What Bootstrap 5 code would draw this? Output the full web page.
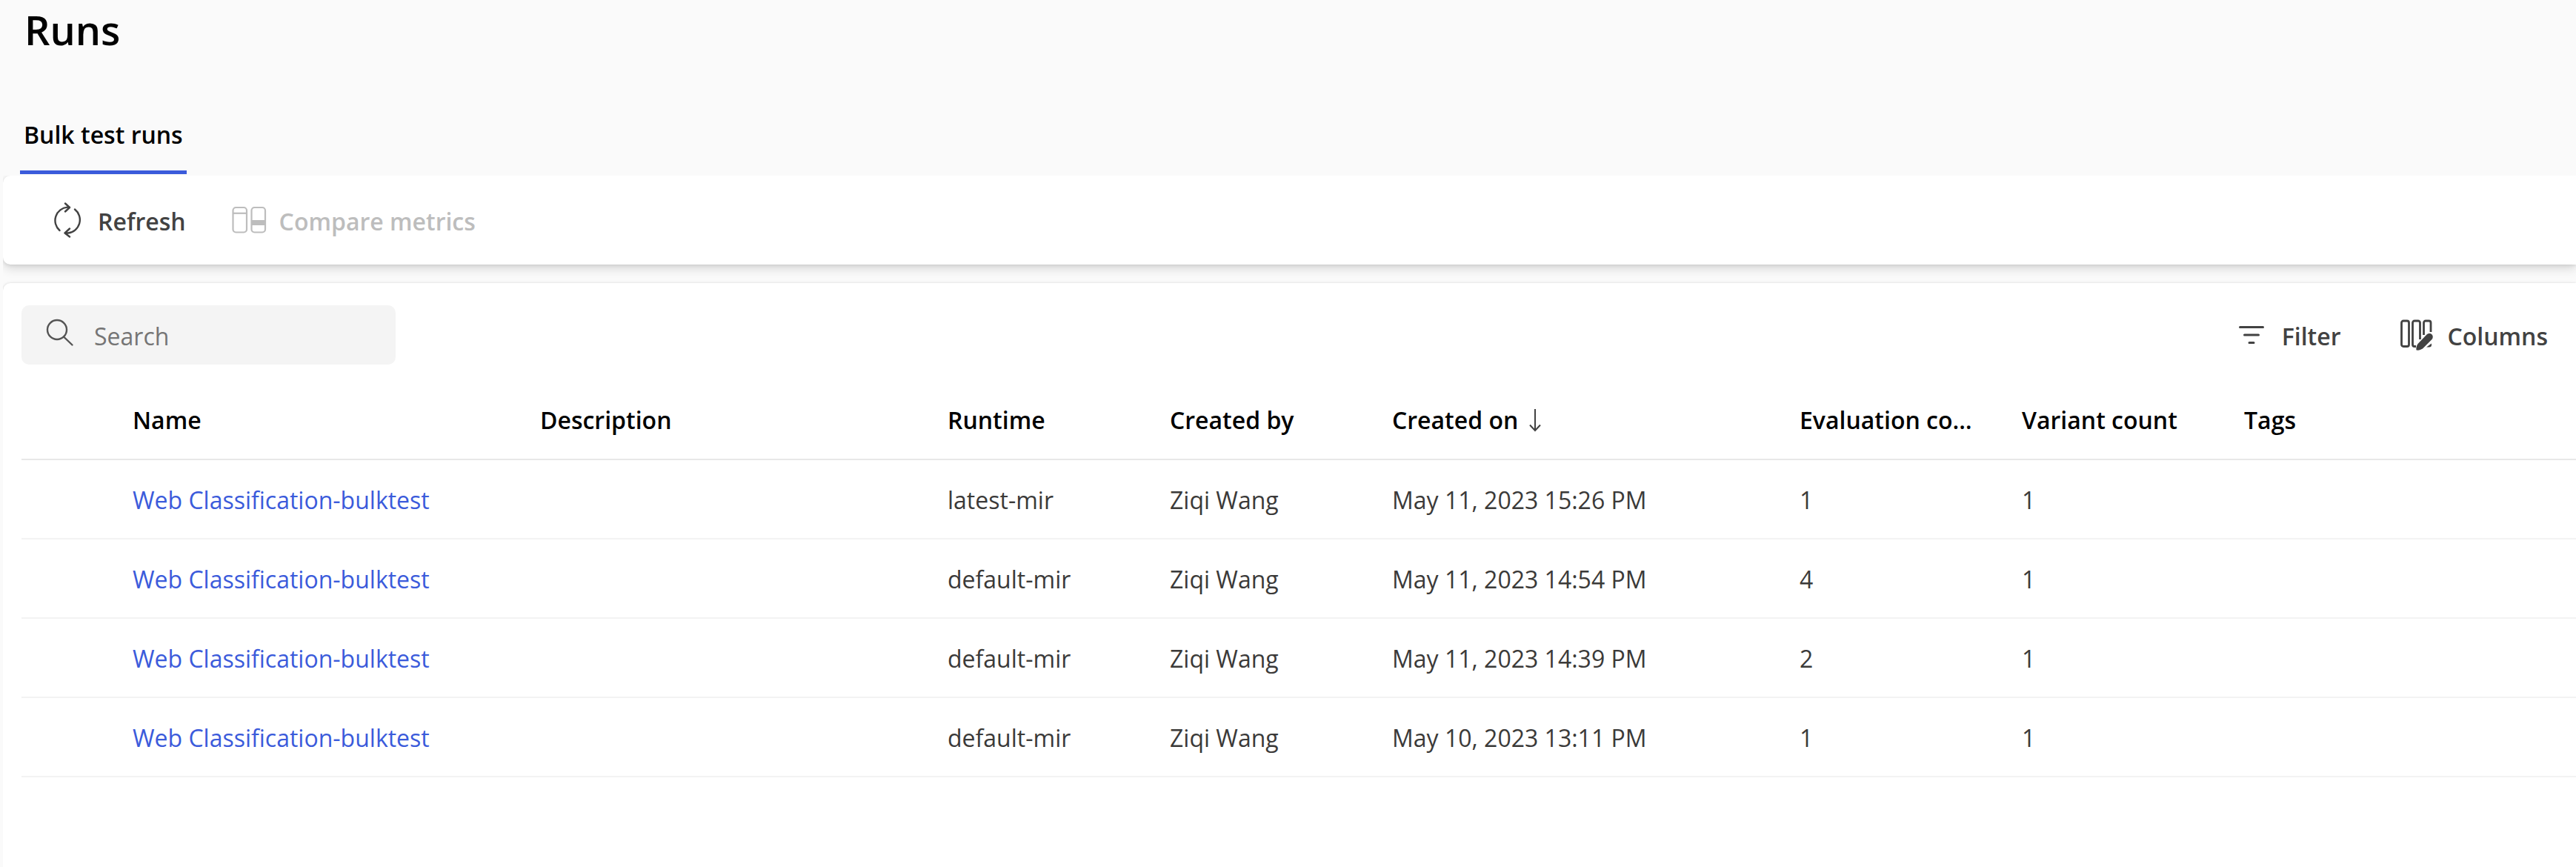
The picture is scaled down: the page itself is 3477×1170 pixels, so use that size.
<!DOCTYPE html>
<html lang="en">
<head>
<meta charset="utf-8">
<meta name="viewport" content="width=device-width, initial-scale=1">
<title>Runs</title>
<link href="https://cdn.jsdelivr.net/npm/bootstrap@5.3.0/dist/css/bootstrap.min.css" rel="stylesheet">
<style>
  body {
    font-family: "Open Sans", "Noto Sans", sans-serif;
    font-size: 32px;
    line-height: 48px;
    color: #3b3a39;
    background: #fafafa;
  }
  .page-title {
    font-size: 54px;
    line-height: 64px;
    font-weight: 600;
    color: #000;
    margin: 0;
    padding: 8px 33px 86px;
  }
  .run-tabs { padding-left: 27px; margin-bottom: 2px; }
  .run-tabs .nav-link {
    padding: 0 5px 24px;
    border-bottom: 5px solid #3b5bdb;
    color: #000;
    font-weight: 600;
  }
  .surfaces { margin-left: 4px; gap: 25px; overflow: hidden; }
  .surface { background: #fff; }
  .command-bar {
    height: 120px;
    padding: 0 68px;
    gap: 62px;
    border-radius: 10px 0 0 10px;
    box-shadow: 0 6px 14px rgba(0, 0, 0, .13), 0 1px 5px rgba(0, 0, 0, .11);
  }
  .runs-panel {
    padding: 30px 0 0 25px;
    border-radius: 10px 0 0 0;
    box-shadow: 0 3px 7px rgba(0, 0, 0, .13), 0 0 3px rgba(0, 0, 0, .11);
  }
  .cmd {
    border: 0;
    padding: 0;
    background: none;
    color: #424242;
    font-weight: 600;
  }
  .cmd:disabled { color: #bdbdbd; }
  .cmd svg { flex: none; }
  .cmd span { padding-top: 3px; }
  .search-box {
    width: 505px;
    height: 80px;
    padding: 0 32px;
    gap: 26px;
    border-radius: 10px;
    background: #f4f4f4;
  }
  .search-box input {
    border: 0;
    padding: 3px 0 0;
    background: none;
    font-size: 32px;
    line-height: 48px;
    color: #3b3a39;
    box-shadow: none !important;
  }
  .search-box input::placeholder { color: #757575; opacity: 1; }
  .panel-actions { gap: 80px; padding-right: 38px; }
  .panel-actions .cmd:last-child { gap: 18px; }
  .panel-actions .cmd:first-child { gap: 24px; }
  .runs-table {
    table-layout: fixed;
    border-collapse: separate;
    border-spacing: 0;
    margin: 19px 0 0;
    color: #3b3a39;
  }
  .runs-table > thead > tr > th,
  .runs-table > tbody > tr > td {
    height: 107px;
    padding: 3px 32px 0 20px;
    border-bottom: 2px solid #f3f3f3;
    vertical-align: middle;
    background: none;
    color: inherit;
    white-space: nowrap;
    overflow: hidden;
    text-overflow: ellipsis;
  }
  .runs-table > thead > tr > th {
    height: 110px;
    border-bottom-color: #e8e8e8;
    color: #000;
    font-weight: 600;
  }
  .runs-table a { color: #3b5bdb; text-decoration: none; }
  .sort-label { gap: 14px; }
  .col-select { width: 130px; }
  .col-wide { width: 550px; }
  .col-narrow { width: 300px; }
</style>
</head>
<body>
<main class="d-flex flex-column min-vh-100">
  <h1 class="page-title">Runs</h1>
  <nav class="nav run-tabs">
    <a class="nav-link active" aria-current="page" href="#">Bulk test runs</a>
  </nav>

  <div class="surfaces d-flex flex-column flex-grow-1">
    <div class="surface command-bar d-flex align-items-center">
      <button type="button" class="cmd d-flex align-items-center gap-3">
        <svg width="44" height="48" viewBox="0 0 44 48" fill="none" stroke="currentColor" stroke-width="2.4" stroke-linecap="round" stroke-linejoin="round" aria-hidden="true">
          <path d="M8.500 38A18 18 0 0 1 19 6.600L22 6.600M16 1.500L22 7L16 12.500M29 9.500A18 18 0 0 1 20 41.500L17 41.500M22 35.500L15.500 41.500L22 46.500"/>
        </svg>
        <span>Refresh</span>
      </button>
      <button type="button" class="cmd d-flex align-items-center gap-3" disabled>
        <svg width="48" height="38" viewBox="0 0 48 38" fill="none" stroke="currentColor" stroke-width="2.200" aria-hidden="true">
          <rect x="1.500" y="2" width="18.500" height="33.500" rx="4"/>
          <rect x="26.500" y="2" width="18.500" height="33.500" rx="4"/>
          <path d="M1.500 9.800H20"/>
          <path d="M26.500 19h18.500v7H26.500z" fill="currentColor" stroke="none"/>
        </svg>
        <span>Compare metrics</span>
      </button>
    </div>

    <section class="surface runs-panel flex-grow-1">
      <div class="d-flex justify-content-between align-items-center">
        <label class="search-box d-flex align-items-center" for="run-search">
          <svg width="40" height="48" viewBox="0 0 40 48" fill="none" stroke="#555" stroke-width="2.400" stroke-linecap="round" class="flex-shrink-0" aria-hidden="true">
            <circle cx="16" cy="17" r="13"/>
            <path d="M25 26.500L36.500 37.500"/>
          </svg>
          <input type="search" id="run-search" class="form-control" placeholder="Search" aria-label="Search">
        </label>
        <div class="panel-actions d-flex align-items-center">
          <button type="button" class="cmd d-flex align-items-center">
            <svg width="34" height="28" viewBox="0 0 34 28" fill="none" stroke="currentColor" stroke-width="3" stroke-linecap="round" aria-hidden="true">
              <path d="M1.500 3.500h31M7.500 14h19M14 24.500h6"/>
            </svg>
            <span>Filter</span>
          </button>
          <button type="button" class="cmd d-flex align-items-center">
            <svg width="46" height="44" viewBox="0 0 46 44" fill="none" stroke="currentColor" stroke-width="2.800" aria-hidden="true">
              <rect x="1.500" y="3" width="10" height="34.500" rx="2.500"/>
              <path d="M26.500 28V5.500A2.500 2.500 0 0 0 24 3h-5a2.500 2.500 0 0 0-2.500 2.500V35A2.500 2.500 0 0 0 19 37.500h2"/>
              <path d="M31.500 22V5.500A2.500 2.500 0 0 1 34 3h4.500A2.500 2.500 0 0 1 41 5.500V18"/>
              <path d="M42 33.500v2q0 3-3 3h-4z" fill="currentColor" stroke="none"/>
              <path d="M21.500 42.500C21 39 22 36 24 33.500L35 22c5-5 11.500 1 7.500 6L30 40.500c-2.500 1.500-5 2.500-8.500 2z" fill="currentColor" stroke="none"/>
            </svg>
            <span>Columns</span>
          </button>
        </div>
      </div>

      <table class="table runs-table">
        <colgroup>
          <col class="col-select"><col class="col-wide"><col class="col-wide"><col class="col-narrow"><col class="col-narrow"><col class="col-wide"><col class="col-narrow"><col class="col-narrow"><col>
        </colgroup>
        <thead>
          <tr>
            <th></th>
            <th scope="col">Name</th>
            <th scope="col">Description</th>
            <th scope="col">Runtime</th>
            <th scope="col">Created by</th>
            <th scope="col" aria-sort="descending">
              <div class="sort-label d-flex align-items-center">
                <span>Created on</span>
                <svg width="18" height="32" viewBox="0 0 18 32" fill="none" stroke="#424242" stroke-width="2" aria-hidden="true">
                  <path d="M9 1v29M2 22.500L9 30l7-7.500"/>
                </svg>
              </div>
            </th>
            <th scope="col">Evaluation count</th>
            <th scope="col">Variant count</th>
            <th scope="col">Tags</th>
          </tr>
        </thead>
        <tbody>
          <tr>
            <td></td><td><a href="#">Web Classification-bulktest</a></td><td></td><td>latest-mir</td><td>Ziqi Wang</td><td>May 11, 2023 15:26 PM</td><td>1</td><td>1</td><td></td>
          </tr>
          <tr>
            <td></td><td><a href="#">Web Classification-bulktest</a></td><td></td><td>default-mir</td><td>Ziqi Wang</td><td>May 11, 2023 14:54 PM</td><td>4</td><td>1</td><td></td>
          </tr>
          <tr>
            <td></td><td><a href="#">Web Classification-bulktest</a></td><td></td><td>default-mir</td><td>Ziqi Wang</td><td>May 11, 2023 14:39 PM</td><td>2</td><td>1</td><td></td>
          </tr>
          <tr>
            <td></td><td><a href="#">Web Classification-bulktest</a></td><td></td><td>default-mir</td><td>Ziqi Wang</td><td>May 10, 2023 13:11 PM</td><td>1</td><td>1</td><td></td>
          </tr>
        </tbody>
      </table>
    </section>
  </div>
</main>
<script src="https://cdn.jsdelivr.net/npm/bootstrap@5.3.0/dist/js/bootstrap.bundle.min.js"></script>
</body>
</html>
